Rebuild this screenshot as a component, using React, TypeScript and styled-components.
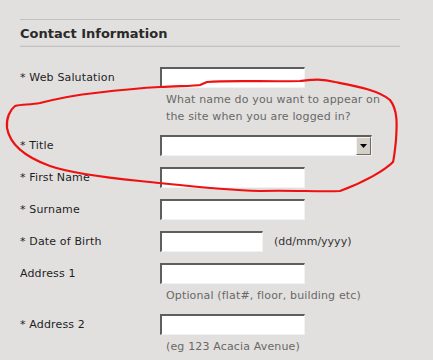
import styled, { createGlobalStyle } from 'styled-components';

const GlobalStyle = createGlobalStyle`
    html, body {
        margin: 0;
        padding: 0;
        background: #e2e0de;
    }
    body {
        font-family: 'DejaVu Sans', Verdana, sans-serif;
        font-size: 11px;
        color: #1e1e1e;
    }
`;

const Page = styled.div`
    position: relative;
    width: 433px;
    height: 360px;
    overflow: hidden;
    padding: 19px 0 0 20px;
    box-sizing: border-box;
`;

const Section = styled.section`
    width: 380px;
`;

const Heading = styled.h2`
    margin: 0 0 20px;
    height: 26px;
    border-top: 1px solid #c3c1bf;
    border-bottom: 1px solid #c3c1bf;
    box-shadow: inset 0 -3px 0 -2px #d8d6d4;
    font-size: 13px;
    font-weight: bold;
    line-height: 28px;
    color: #2a2a2a;
`;

const Row = styled.div`
    display: grid;
    grid-template-columns: 140px 1fr;
    margin-bottom: 11px;
`;

const Label = styled.label`
    line-height: 21px;
    letter-spacing: 0.15px;
`;

const Field = styled.div`
    display: flex;
    flex-direction: column;
`;

const Inline = styled.div`
    display: flex;
    align-items: center;
    gap: 11px;
    color: #333;
`;

const Input = styled.input<{ $width?: number }>`
    width: ${(p) => p.$width ?? 145}px;
    height: 21px;
    box-sizing: border-box;
    margin: 0;
    padding: 0 3px;
    background: #fff;
    border-style: solid;
    border-width: 2px 1px 1px 2px;
    border-color: #5e5e5e #f2f2f2 #f2f2f2 #5e5e5e;
    outline: none;
    font: inherit;
`;

const Select = styled.div`
    width: 212px;
    height: 21px;
    box-sizing: border-box;
    display: flex;
    justify-content: flex-end;
    background: #fff;
    border-style: solid;
    border-width: 2px 1px 1px 2px;
    border-color: #5e5e5e #f2f2f2 #f2f2f2 #5e5e5e;
`;

const DropButton = styled.div`
    width: 15px;
    height: 18px;
    box-sizing: border-box;
    display: flex;
    align-items: center;
    justify-content: center;
    background: #d4d0c8;
    border-style: solid;
    border-width: 1px;
    border-color: #f4f3ef #6e6c68 #6e6c68 #f4f3ef;
`;

const Hint = styled.div`
    margin: 3px 0 -1px;
    padding-left: 6px;
    width: 230px;
    line-height: 17px;
    color: #686868;
    letter-spacing: 0.15px;
`;

const Annotation = styled.svg`
    position: absolute;
    left: 0;
    top: 0;
    pointer-events: none;
`;

const App = () => {
    return (
        <Page>
            <GlobalStyle />
            <Section>
                <Heading>Contact Information</Heading>
                <Row>
                    <Label>* Web Salutation</Label>
                    <Field>
                        <Input />
                        <Hint>What name do you want to appear on the site when you are logged in?</Hint>
                    </Field>
                </Row>
                <Row>
                    <Label>* Title</Label>
                    <Field>
                        <Select>
                            <DropButton>
                                <svg width="7" height="4" viewBox="0 0 7 4">
                                    <path d="M0 0h7L3.5 4z" fill="#000" />
                                </svg>
                            </DropButton>
                        </Select>
                    </Field>
                </Row>
                <Row>
                    <Label>* First Name</Label>
                    <Field>
                        <Input />
                    </Field>
                </Row>
                <Row>
                    <Label>* Surname</Label>
                    <Field>
                        <Input />
                    </Field>
                </Row>
                <Row>
                    <Label>* Date of Birth</Label>
                    <Inline>
                        <Input $width={103} />
                        <span>(dd/mm/yyyy)</span>
                    </Inline>
                </Row>
                <Row>
                    <Label>Address 1</Label>
                    <Field>
                        <Input />
                        <Hint>Optional (flat#, floor, building etc)</Hint>
                    </Field>
                </Row>
                <Row>
                    <Label>* Address 2</Label>
                    <Field>
                        <Input />
                        <Hint>(eg 123 Acacia Avenue)</Hint>
                    </Field>
                </Row>
            </Section>
            <Annotation width="433" height="360" viewBox="0 0 433 360">
                <path
                    d="M160 87 C 180 86, 195 86, 200 85 L 207 82 C 230 80, 270 82, 300 81 C 310 80, 320 78, 335 82 C 355 86, 378 90, 390 100 C 398 110, 397 125, 396 140 C 395 150, 394 158, 393 162 C 385 170, 365 182, 340 191 C 320 192, 290 190, 260 191 C 220 190, 180 185, 140 181 C 100 177, 70 173, 50 166 C 25 157, 10 145, 7 128 C 6 118, 10 110, 15 106 C 22 104, 30 105, 40 103 C 60 98, 75 95, 95 93 C 120 90, 140 88, 160 87 Z"
                    fill="none"
                    stroke="#ee1111"
                    strokeWidth="2.2"
                    strokeLinejoin="round"
                />
            </Annotation>
        </Page>
    );
};

export default App;
